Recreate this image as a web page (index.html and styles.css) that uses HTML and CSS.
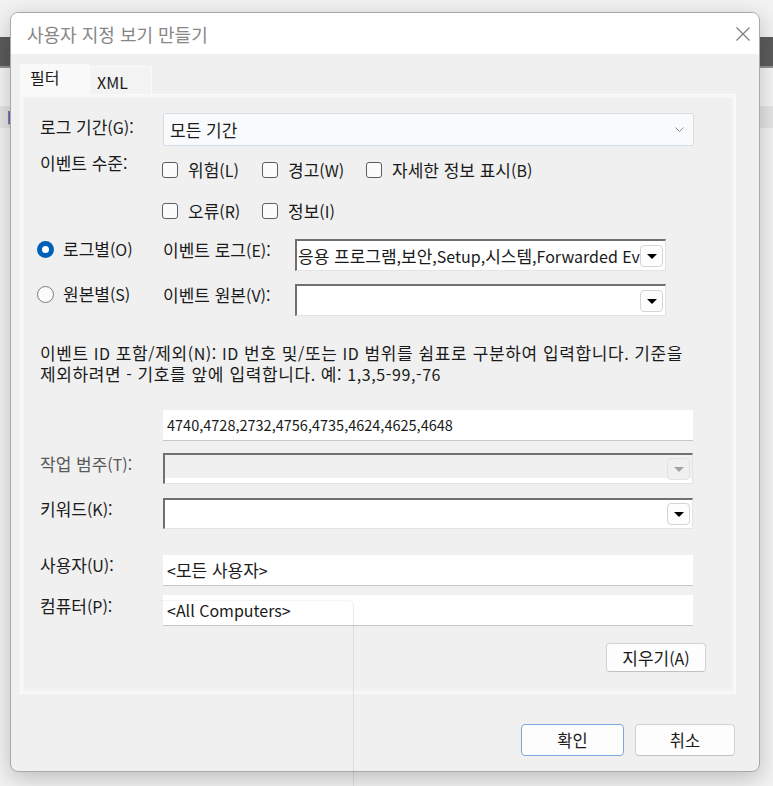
FILE: index.html
```html
<!DOCTYPE html>
<html lang="ko">
<head>
<meta charset="utf-8">
<title>사용자 지정 보기 만들기</title>
<link rel="stylesheet" href="styles.css">
</head>
<body>
<div class="bgwin">
  <div class="bg-bar"></div>
  <div class="bg-gap"></div>
  <div class="bg-row"><span class="bg-glyph">ㅣ</span></div>
</div>

<div class="dialog">
  <div class="titlebar">
    <span class="title">사용자 지정 보기 만들기</span>
    <svg class="close" width="14" height="14" viewBox="0 0 14 14"><path d="M0.5 0.5 L13.5 13.5 M13.5 0.5 L0.5 13.5" stroke="#7a7a7a" stroke-width="1.1" fill="none"/></svg>
  </div>
  <div class="body">
    <div class="tabs">
      <div class="tab active">필터</div>
      <div class="tab xml">XML</div>
    </div>
    <div class="panel">
      <div class="row r-period">
        <span class="lbl"><span class="k">로그 기간</span>(G):</span>
        <div class="select">
          <span class="k">모든 기간</span>
          <svg class="chev" width="9" height="5" viewBox="0 0 9 5"><path d="M0.5 0.5 L4.5 4.5 L8.5 0.5" stroke="#8a8a8a" stroke-width="1" fill="none"/></svg>
        </div>
      </div>
      <div class="row r-level">
        <span class="lbl"><span class="k">이벤트 수준</span>:</span>
        <div class="checks">
          <div class="chk"><span class="box"></span><span><span class="k">위험</span>(L)</span></div>
          <div class="chk"><span class="box"></span><span><span class="k">경고</span>(W)</span></div>
          <div class="chk"><span class="box"></span><span><span class="k">자세한 정보 표시</span>(B)</span></div>
          <div class="chk"><span class="box"></span><span><span class="k">오류</span>(R)</span></div>
          <div class="chk"><span class="box"></span><span><span class="k">정보</span>(I)</span></div>
        </div>
      </div>
      <div class="row r-radio first">
        <div class="rlbl"><span class="radio on"></span><span><span class="k">로그별</span>(O)</span></div>
        <span class="sub"><span class="k">이벤트 로그</span>(E):</span>
        <div class="combo short">
          <span class="ctext"><span class="k">응용 프로그램</span>,<span class="k">보안</span>,Setup,<span class="k">시스템</span>,Forwarded Events</span>
          <span class="dd"><span class="tri"></span></span>
        </div>
      </div>
      <div class="row r-radio second">
        <div class="rlbl"><span class="radio"></span><span><span class="k">원본별</span>(S)</span></div>
        <span class="sub"><span class="k">이벤트 원본</span>(V):</span>
        <div class="combo short">
          <span class="ctext"></span>
          <span class="dd"><span class="tri"></span></span>
        </div>
      </div>
      <p class="help"><span class="k">이벤트</span> ID <span class="k">포함</span>/<span class="k">제외</span>(N): ID <span class="k">번호 및</span>/<span class="k">또는</span> ID <span class="k">범위를 쉼표로 구분하여 입력합니다</span>. <span class="k">기준을</span><br><span class="k">제외하려면</span> - <span class="k">기호를 앞에 입력합니다</span>. <span class="k">예</span>: 1,3,5-99,-76</p>
      <div class="tinput id">4740,4728,2732,4756,4735,4624,4625,4648</div>
      <div class="row r-task">
        <span class="lbl dim"><span class="k">작업 범주</span>(T):</span>
        <div class="combo wide disabled">
          <span class="ctext"></span>
          <span class="dd"><span class="tri"></span></span>
        </div>
      </div>
      <div class="row r-kw">
        <span class="lbl"><span class="k">키워드</span>(K):</span>
        <div class="combo wide">
          <span class="ctext"></span>
          <span class="dd"><span class="tri"></span></span>
        </div>
      </div>
      <div class="row r-user">
        <span class="lbl"><span class="k">사용자</span>(U):</span>
        <div class="tinput">&lt;<span class="k">모든 사용자</span>&gt;</div>
      </div>
      <div class="row r-comp">
        <span class="lbl"><span class="k">컴퓨터</span>(P):</span>
        <div class="tinput">&lt;All Computers&gt;</div>
      </div>
      <div class="clear-row">
        <button class="btn clear"><span class="k">지우기</span>(A)</button>
      </div>
    </div>
    <div class="footer">
      <button class="btn ok">확인</button>
      <button class="btn cancel">취소</button>
    </div>
  </div>
</div>

<div class="ghost"></div>
</body>
</html>
```

FILE: styles.css
```css
* { box-sizing: border-box; }

body {
  margin: 0;
  width: 773px;
  height: 786px;
  position: relative;
  overflow: hidden;
  background: #f2f2f2;
  font-family: "Noto Sans CJK KR", "Noto Sans", sans-serif;
  font-size: 16px;
  color: #1a1a1a;
}

/* Hangul runs are set a little larger than the Latin around them,
   with a tight line-height so the line box does not grow */
.k { font-size: 17px; line-height: 1; }

/* background window peeking out at the edges */
.bgwin { padding-top: 37px; }
.bg-bar { height: 31px; background: #5b5b5b; border-bottom: 2px solid #909090; }
.bg-gap { height: 38px; background: #f4f4f4; }
.bg-row {
  height: 22px;
  background: #e4e4e4;
  line-height: 22px;
  padding-left: 2px;
  color: #2b3f8c;
  font-size: 15px;
}

/* dialog window */
.dialog {
  position: absolute;
  left: 10px;
  top: 12px;
  width: 750px;
  height: 760px;
  border: 1px solid #a8a8a8;
  border-radius: 8px;
  background: #f0f0f0;
  box-shadow: 0 6px 22px rgba(0, 0, 0, 0.22);
  overflow: hidden;
  display: flex;
  flex-direction: column;
}

.titlebar {
  height: 41px;
  flex: none;
  background: #fff;
  display: flex;
  align-items: center;
  justify-content: space-between;
  padding: 0 9px 0 16px;
}
.title { color: #878787; font-size: 18px; line-height: 20px; }

.body {
  flex: 1;
  padding: 10px 23px 0 9px;
}

.tabs { display: flex; align-items: flex-end; height: 30px; }
.tab.active {
  width: 69px;
  height: 30px;
  background: #f9f9f9;
  padding-left: 10px;
  line-height: 26px;
}
.tab.xml {
  width: 63px;
  height: 28px;
  background: #f3f3f3;
  border: 1px solid #fafafa;
  border-bottom: 0;
  padding: 4px 0 0 7px;
  line-height: 22px;
}

.panel {
  height: 600px;
  border: 1px solid #fbfbfb;
  box-shadow: inset 0 0 0 3px #f6f6f6;
  padding: 18px 42px 0 19px;
  display: flex;
  flex-direction: column;
}

.row { display: flex; align-items: flex-start; flex: none; }
.lbl { width: 123px; flex: none; line-height: 20px; white-space: nowrap; }
.lbl.dim { color: #595959; }

.r-period { height: 33px; }
.r-period .lbl { padding-top: 4px; }
.select {
  flex: 1;
  height: 33px;
  margin-right: -1px;
  border: 1px solid #d5dde6;
  border-radius: 2px;
  background: #f8fafc;
  display: flex;
  align-items: center;
  justify-content: space-between;
  padding: 0 9px 0 6px;
}

.r-level { margin-top: 7px; }
.checks {
  display: grid;
  grid-template-columns: 100px 104px auto;
  grid-auto-rows: 20px;
  row-gap: 21px;
  padding-top: 7px;
  margin-left: -1px;
}
.chk { display: flex; align-items: center; gap: 10px; line-height: 20px; white-space: nowrap; }
.box {
  width: 16px;
  height: 16px;
  border: 1px solid #5e5e5e;
  border-radius: 3px;
  background: #fbfbfb;
  flex: none;
}

.r-radio.first { margin-top: 18px; }
.r-radio.second { margin-top: 13px; }
.rlbl {
  width: 123px;
  flex: none;
  display: flex;
  align-items: center;
  gap: 9px;
  height: 20px;
  margin-left: -3px;
  margin-right: 3px;
  white-space: nowrap;
}
.radio {
  width: 17px;
  height: 17px;
  border-radius: 50%;
  border: 1px solid #7a7a7a;
  background: #fbfbfb;
  flex: none;
}
.radio.on {
  border: 5px solid #005fb8;
  background: #fff;
}
.sub { width: 132px; flex: none; line-height: 20px; margin-top: 1px; white-space: nowrap; }

.combo {
  height: 32px;
  background: #fff;
  border-top: 2px solid #707070;
  border-left: 2px solid #707070;
  border-right: 1px solid #e4e4e4;
  border-bottom: 1px solid #e4e4e4;
  display: flex;
  align-items: center;
  overflow: hidden;
}
.combo.short { width: 371px; }
.combo.wide { flex: 1; height: 31px; }
.combo.disabled {
  background: linear-gradient(#f0f0f0 calc(100% - 5px), #ffffff 0);
}
.ctext {
  flex: 1;
  min-width: 0;
  white-space: nowrap;
  overflow: hidden;
  padding-left: 1px;
  line-height: 26px;
}
.dd {
  flex: none;
  width: 23px;
  height: 22px;
  margin-right: 2px;
  border: 1px solid #d4d4d4;
  border-radius: 4px;
  background: #fdfdfd;
  display: flex;
  align-items: center;
  justify-content: center;
}
.tri {
  width: 0;
  height: 0;
  border-left: 5px solid transparent;
  border-right: 5px solid transparent;
  border-top: 5px solid #000;
  margin-top: 1px;
}
.disabled .dd { background: #f0f0f0; border-color: #e2e2e2; }
.disabled .tri { border-top-color: #a3a3a3; }

.help {
  margin: 27px 0 0 0;
  line-height: 21px;
  letter-spacing: 0.6px;
  white-space: nowrap;
  flex: none;
}

.tinput {
  height: 31px;
  flex: 1;
  background: #fff;
  border-bottom: 1px solid #c6c6c6;
  padding-left: 4px;
  line-height: 30px;
  white-space: nowrap;
}
.tinput.id { flex: none; margin: 25px 0 0 123px; font-size: 14.5px; }

.r-task { margin-top: 12px; }
.r-kw { margin-top: 14px; }
.r-user { margin-top: 26px; }
.r-comp { margin-top: 9px; }
.r-task .lbl, .r-kw .lbl, .r-comp .lbl { padding-top: 1px; }

.clear-row {
  flex: none;
  margin-top: 17px;
  display: flex;
  justify-content: flex-end;
  margin-right: -13px;
}

.btn {
  font: inherit;
  color: #1a1a1a;
  background: #fdfdfd;
  border: 1px solid #d2d2d2;
  border-bottom-color: #c2c2c2;
  border-radius: 4px;
  padding: 0;
}
.btn.clear { width: 100px; height: 29px; }

.footer {
  display: flex;
  justify-content: flex-end;
  gap: 11px;
  margin-top: 30px;
  padding-right: 1px;
}
.btn.ok { width: 103px; height: 32px; border: 1px solid #7ea8db; font-size: 16.5px; }
.btn.cancel { width: 100px; height: 32px; font-size: 16.5px; }

/* faint ghost of another window overlapping the bottom-left */
.ghost {
  position: absolute;
  left: 160px;
  top: 600px;
  width: 194px;
  height: 200px;
  border-top: 1px solid rgba(0, 0, 0, 0.04);
  border-right: 1px solid rgba(0, 0, 0, 0.08);
  border-top-right-radius: 6px;
  pointer-events: none;
}
```
